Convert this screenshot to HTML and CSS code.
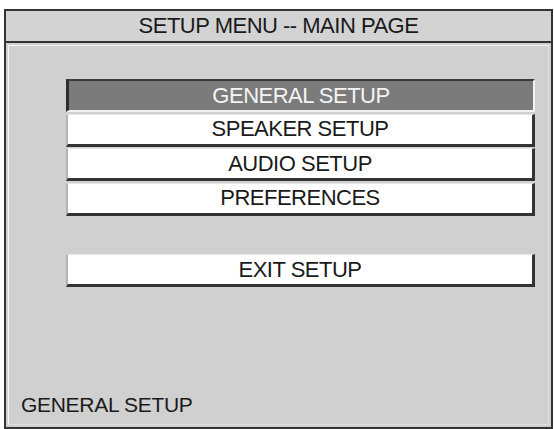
FILE: index.html
```html
<!DOCTYPE html>
<html>
<head>
<meta charset="utf-8">
<link rel="stylesheet" href="styles.css">
</head>
<body>
<div class="frame">
  <div class="title">SETUP MENU -- MAIN PAGE</div>
  <div class="panel">
    <div class="inner">
      <div class="menu">
        <div class="btn selected">GENERAL SETUP</div>
        <div class="btn">SPEAKER SETUP</div>
        <div class="btn">AUDIO SETUP</div>
        <div class="btn">PREFERENCES</div>
        <div class="btn exit">EXIT SETUP</div>
      </div>
      <div class="status">GENERAL SETUP</div>
    </div>
  </div>
</div>
</body>
</html>
```
FILE: styles.css
```css
html, body {
  margin: 0;
  padding: 0;
  background: #ffffff;
}
body {
  width: 554px;
  height: 429px;
  overflow: hidden;
  font-family: "Liberation Sans", Arial, sans-serif;
  font-size: 22px;
  letter-spacing: -0.5px;
  color: #1a1a1a;
}
.frame {
  box-sizing: border-box;
  margin: 9px 0 0 4px;
  width: 549px;
  height: 420px;
  border: 2px solid #333333;
  background: #d0d0d0;
  display: flex;
  flex-direction: column;
}
.title {
  flex: none;
  height: 32px;
  box-sizing: border-box;
  border-bottom: 2px solid #333333;
  line-height: 30px;
  text-align: center;
  background: #d3d3d3;
}
.panel {
  flex: 1;
  display: flex;
  padding: 2px 2px 2px 2px;
}
.inner {
  flex: 1;
  display: flex;
  flex-direction: column;
  border-top: 1px solid #f6f6f6;
  border-left: 1px solid #f6f6f6;
  border-right: 1px solid #dedede;
  border-bottom: 1px solid #dedede;
}
.menu {
  display: flex;
  flex-direction: column;
  padding-top: 33px;
  margin-left: 57px;
  margin-right: 13px;
}
.btn {
  box-sizing: border-box;
  height: 33px;
  margin-bottom: 1.5px;
  background: #ffffff;
  border-top: 1px solid #e6e6e6;
  border-left: 2px solid #b4b4b4;
  border-right: 3px solid #333333;
  border-bottom: 3px solid #333333;
  display: flex;
  align-items: center;
  justify-content: center;
  color: #1a1a1a;
  line-height: 24px;
}
.btn.selected {
  background: #7b7b7b;
  color: #f4f4f4;
  border-top: 2px solid #3a3a3a;
  border-left: 3px solid #2e2e2e;
  border-right: 2px solid #f2f2f2;
  border-bottom: 2px solid #f2f2f2;
}
.btn.exit {
  margin-top: 37px;
}
.status {
  margin-top: auto;
  padding: 0 0 7px 12px;
  font-size: 21px;
  line-height: 24px;
  letter-spacing: -0.3px;
  color: #1a1a1a;
}
```
